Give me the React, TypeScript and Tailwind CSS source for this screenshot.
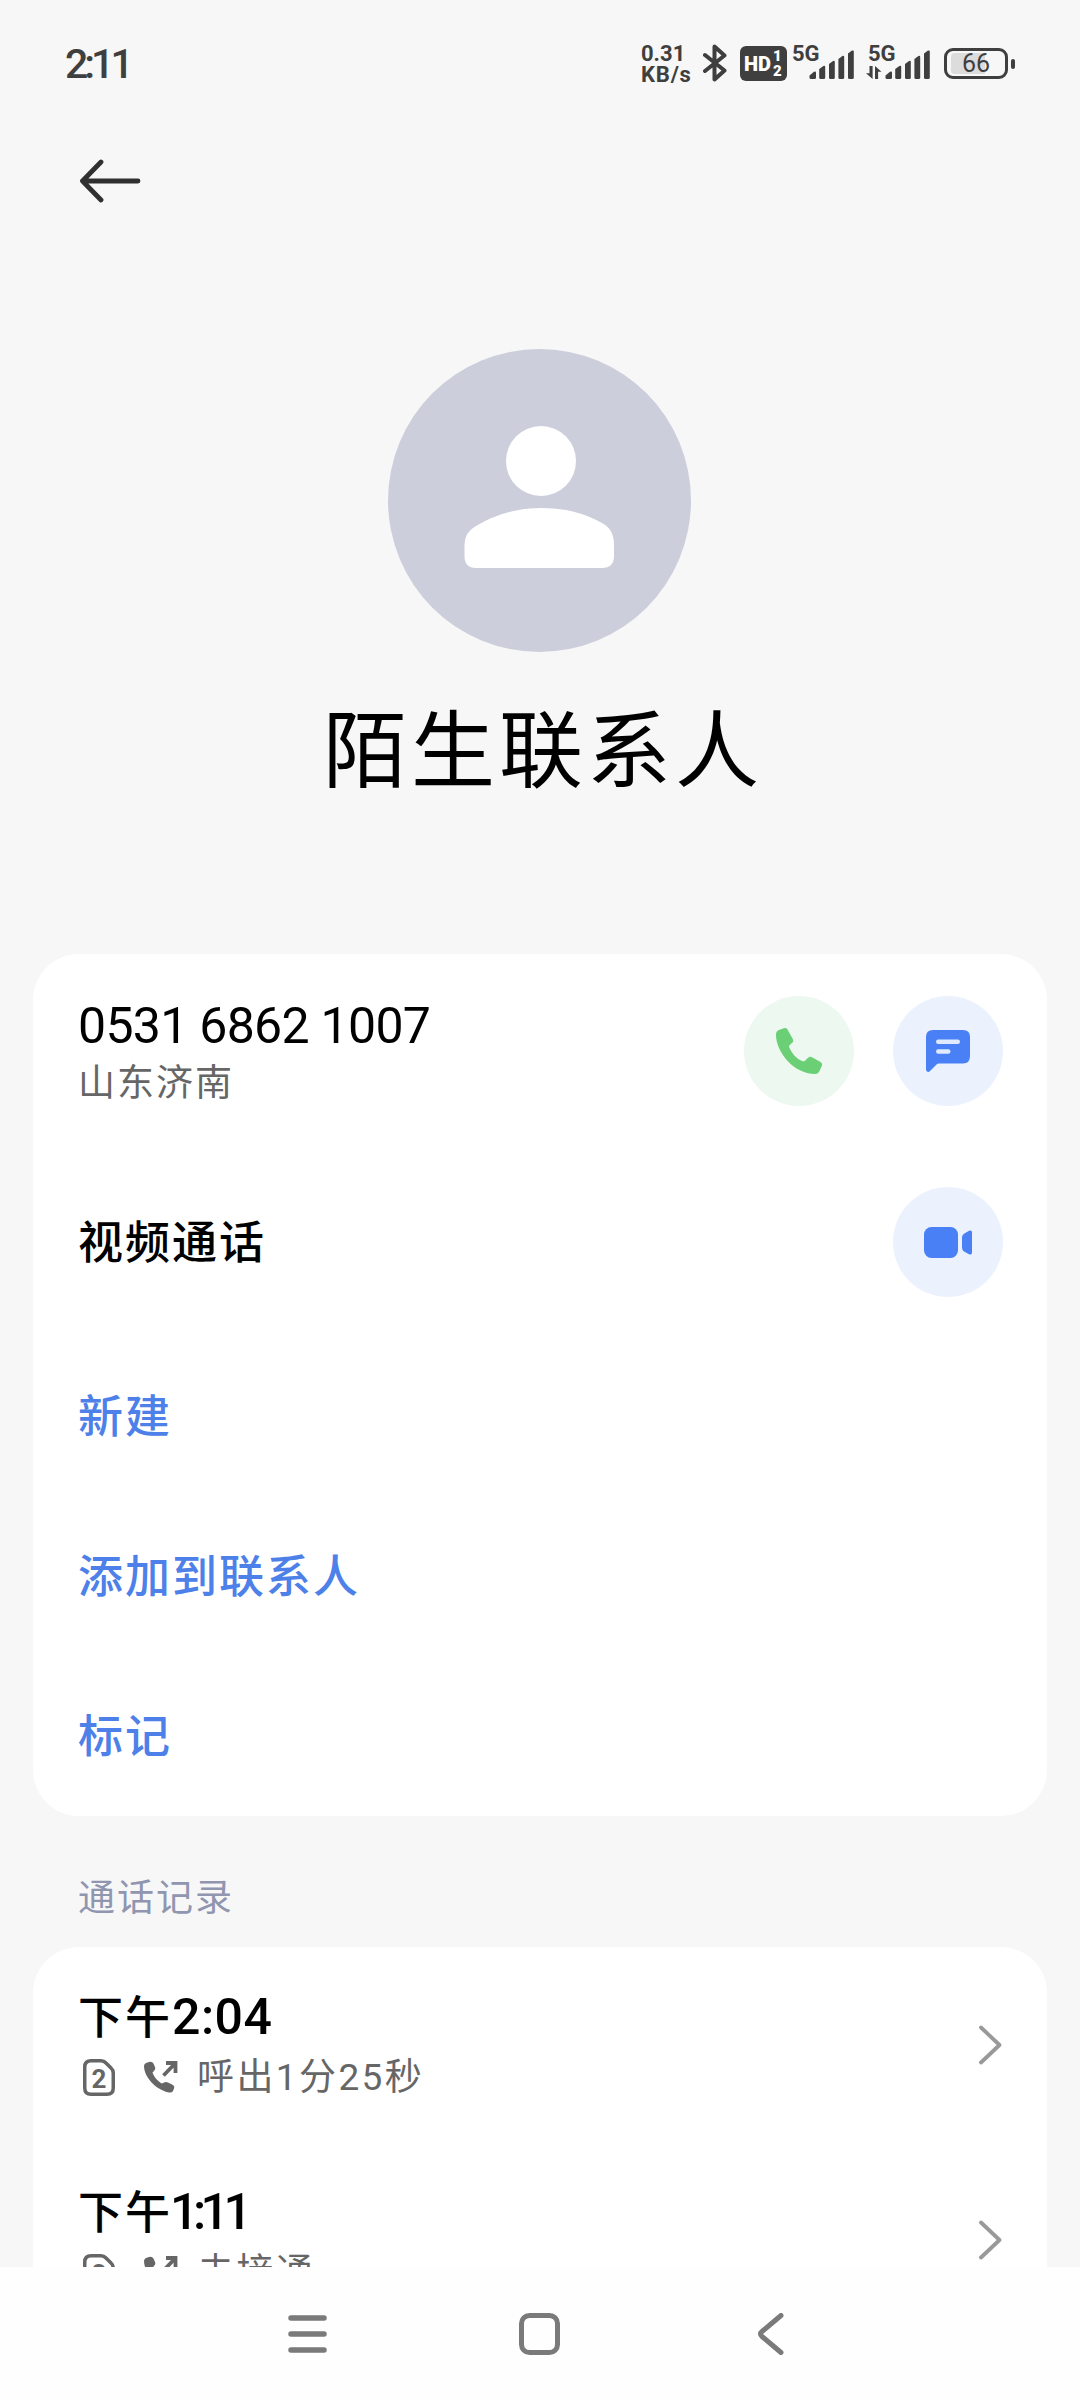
import React from 'react';

type CallRecord = {
  period: string;
  time: string;
  timeClass: string;
  detail: string;
};

const ACTIONS = ['新建', '添加到联系人', '标记'];

const RECORDS: CallRecord[] = [
  { period: '下午', time: '2:04', timeClass: 'tracking-[0.5px]', detail: '呼出1分25秒' },
  // pairs of 1s are set tighter
  { period: '下午', time: '1:11', timeClass: 'tracking-[-5.5px] -ml-[2px]', detail: '未接通' },
];

function SignalBars() {
  return (
    <svg className="h-[29px] w-[46px]" viewBox="0 0 46 29" fill="#3f3f3f">
      <path d="M0.5 27.5V25.5L5 21.8Q7 21 7 23V27.5Q7 29 5.5 29H2Q.5 29 .5 27.5Z" />
      <path d="M10.2 27.5V19L14.4 16Q16.2 15.3 16.2 17V27.5Q16.2 29 14.7 29H11.7Q10.2 29 10.2 27.5Z" />
      <path d="M20 27.5V14L24 11Q25.8 10.4 25.8 12V27.5Q25.8 29 24.3 29H21.5Q20 29 20 27.5Z" />
      <path d="M29.4 27.5V9L33.4 6Q35.2 5.4 35.2 7V27.5Q35.2 29 33.7 29H30.9Q29.4 29 29.4 27.5Z" />
      <path d="M39 27.5V3.5L43 .5Q44.8 0 44.8 1.6V27.5Q44.8 29 43.3 29H40.5Q39 29 39 27.5Z" />
    </svg>
  );
}

function Signal({ data }: { data?: boolean }) {
  return (
    <div className="relative h-[33px] w-[62px]">
      <span className="absolute left-0 top-0 text-[22px] leading-[16px] font-bold">5G</span>
      {data && (
        <svg className="absolute bottom-0 left-[-2px] h-[13px] w-[16px]" viewBox="0 0 16 13" fill="#3f3f3f">
          <path d="M3.5 0H6.6V13L0 7.2H3.5ZM9 13V0L15.5 5.8H12.1V13Z" />
        </svg>
      )}
      <div className="absolute bottom-0 left-[17px]">
        <SignalBars />
      </div>
    </div>
  );
}

function StatusBar() {
  return (
    <header className="flex h-[127px] items-start justify-between pl-[65px] pr-[65px] pt-[44px] text-[#3f3f3f]">
      <span className="mt-[2px] text-[41px] leading-[36px] font-medium tracking-[-4px]">2:11</span>
      <div className="flex items-start">
        <div className="w-[62px] text-[22px] leading-[21px] font-bold">
          <div className="-mt-[1px]">0.31</div>
          <div className="tracking-[0.8px]">KB/s</div>
        </div>
        <svg className="mr-[13px] h-[38px] w-[24px]" viewBox="0 0 24 38" fill="none" stroke="#3f3f3f" strokeWidth="4" strokeLinejoin="round" strokeLinecap="round">
          <path d="M2 11 21.5 26.5 11.5 35.5V2.5L21.5 11.5 2 27" />
        </svg>
        <div className="mr-[5px] mt-[2px] flex h-[35px] w-[47px] items-center rounded-[6px] bg-[#3f3f3f] pl-[4px] text-white">
          <span className="text-[20px] leading-none font-black">HD</span>
          <span className="ml-[2px] flex flex-col text-[15px] leading-[15px] font-black">
            <span>1</span>
            <span>2</span>
          </span>
        </div>
        <div className="mt-[2px] flex">
          <Signal />
          <div className="w-[14px]" />
          <Signal data />
        </div>
        <div className="ml-[14px] mt-[4px] flex items-center">
          <div className="relative flex h-[31px] w-[64px] items-center justify-center rounded-[9px] border-[3px] border-[#3f3f3f]">
            <div className="absolute left-[4px] top-[2px] h-[21px] w-[34px] rounded-l-[4px] bg-[#dcdcdc]" />
            <span className="relative text-[25px] leading-none">66</span>
          </div>
          <div className="ml-[3px] h-[10px] w-[4px] rounded-[2px] bg-[#3f3f3f]" />
        </div>
      </div>
    </header>
  );
}

function Avatar() {
  return (
    <div className="mr-[1px] mt-[114px] h-[303px] w-[303px] rounded-full bg-[#cccedb]">
      <svg className="h-full w-full" viewBox="0 0 303 303" fill="#fff">
        <circle cx="153" cy="112" r="35" />
        <path d="M76.5 196Q76.5 183 88 177Q118 159 153 159T214 174Q226 180 226 196V207Q226 219 214 219H88Q76.5 219 76.5 207Z" />
      </svg>
    </div>
  );
}

function PhoneButton() {
  return (
    <button type="button" className="flex h-[110px] w-[110px] items-center justify-center rounded-full bg-[#edf8f0]">
      <svg className="h-[46px] w-[46px]" viewBox="0 0 46 46" fill="#6bcf76">
        <path d="M0 7C0 4 1 3 3 2L7 .5Q10 -.8 11.5 1.5L17 11.5Q17.8 13 16.5 14.5L13.3 17.5Q12.8 18.5 13.3 19.5C16 26 21 31 26 33Q27.5 33.8 29 32.8L32 29.8Q34 28 36 29.2L44.5 34Q46.8 35.5 45.7 38L43.5 43Q42.3 46 39 46C18 46 0 24 0 7Z" />
      </svg>
    </button>
  );
}

function MessageButton() {
  return (
    <button type="button" className="flex h-[110px] w-[110px] items-center justify-center rounded-full bg-[#ebf2fe]">
      <svg className="h-[44px] w-[44px]" viewBox="0 0 44 44" fill="#4a80f5">
        <path d="M7 1H37Q44 1 44 8V27Q44 34.5 37 34.5H13Q11.5 34.5 10.5 35.5L4 42Q2.5 43.5 1 42.5Q0 42 0 40V8Q0 1 7 1Z" />
        <rect x="10" y="10.5" width="24" height="4.5" rx="2.25" fill="#dfeafe" />
        <rect x="10" y="20.3" width="14.5" height="4.5" rx="2.25" fill="#dfeafe" />
      </svg>
    </button>
  );
}

function VideoButton() {
  return (
    <button type="button" className="flex h-[110px] w-[110px] items-center justify-center rounded-full bg-[#ebf2fe]">
      <svg className="h-[31px] w-[48px]" viewBox="0 0 48 31" fill="#4a80f5">
        <rect x="0" y="0" width="34" height="31" rx="7.5" />
        <path d="M38 10.5Q38 8 40 6.8L45 3.8Q48 2.5 48 5.5V25.5Q48 28.5 45 27.2L40 24.5Q38 23.5 38 20.5Z" />
      </svg>
    </button>
  );
}

function RecordRow({ period, time, timeClass, detail }: CallRecord) {
  return (
    <div className="flex h-[195px] items-center justify-between">
      <div className="pt-[5px]">
        <div className="flex items-baseline text-[45px] leading-[58px] font-medium text-black">
          <span className="tracking-[2px]">{period}</span>
          <span className={`text-[50px] ${timeClass}`}>{time}</span>
        </div>
        <div className="flex h-[58px] items-center text-[#666]">
          <svg className="ml-[5px] h-[37px] w-[32px]" viewBox="0 0 32 37" fill="none" stroke="#666" strokeWidth="3.5">
            <path d="M8 1.75H18Q21 1.75 23 4L28 9Q30.25 11 30.25 14V29Q30.25 35.25 24 35.25H8Q1.75 35.25 1.75 29V8Q1.75 1.75 8 1.75Z" />
            <text x="16" y="29" textAnchor="middle" fontSize="26" fontWeight="700" fill="#666" stroke="none">2</text>
          </svg>
          <svg className="ml-[29px] h-[32px] w-[34px]" viewBox="0 0 34 32" fill="#666">
            <path d="M0 5Q0 3 2 2L5 1Q8 0 9.5 2.5L11 6Q12 8.5 10 10L8.5 11.5C10 16 14 20.5 18 22.5L20 21.5Q22 20.5 24 21.5L28 23.5Q31 25 30 27.5L29 30Q28 32 25 31.5C12 29 0 16 0 5Z" />
            <path d="M22 2H31.5V12M31.5 2 19.5 14.5" fill="none" stroke="#666" strokeWidth="3.8" />
          </svg>
          <span className="ml-[19px] pt-[1px] text-[37px] leading-[48px] tracking-[2.4px]">{detail}</span>
        </div>
      </div>
      <svg className="h-[40px] w-[24px]" viewBox="0 0 24 40" fill="none" stroke="#999" strokeWidth="3.8" strokeLinecap="round" strokeLinejoin="round">
        <path d="M2 2.5 20.5 20 2 37.5" />
      </svg>
    </div>
  );
}

export default function App() {
  return (
    <div className="flex h-[2400px] w-[1080px] flex-col overflow-hidden bg-[#f7f7f7] font-['Roboto','Noto_Sans_CJK_SC',sans-serif]">
      <StatusBar />

      {/* Back */}
      <div className="flex h-[108px] items-center pl-[79px]">
        <svg className="h-[44px] w-[62px]" viewBox="0 0 62 44" fill="none" stroke="#303030" strokeWidth="4.8" strokeLinecap="round" strokeLinejoin="round">
          <path d="M59 22H3.5M22 3 3.5 22 22 41" />
        </svg>
      </div>

      {/* Contact */}
      <section className="flex h-[719px] flex-col items-center">
        <Avatar />
        <h1 className="mt-[41px] pl-[6px] text-[84px] leading-[120px] tracking-[4px] text-black">陌生联系人</h1>
      </section>

      <section className="mx-[33px] h-[862px] shrink-0 rounded-[46px] bg-white pl-[45px] pr-[44px]">
        <div className="flex h-[194px] items-center justify-between">
          <div className="pt-[8px]">
            <div className="text-[50px] leading-[56px] tracking-[-0.7px] text-black">0531 6862 1007</div>
            <div className="pt-[2px] text-[37px] leading-[56px] tracking-[2px] text-[#666]">山东济南</div>
          </div>
          <div className="flex gap-[39px]">
            <PhoneButton />
            <MessageButton />
          </div>
        </div>
        <div className="flex h-[188px] items-center justify-between">
          <span className="pt-[3px] text-[45px] font-medium tracking-[2px] text-black">视频通话</span>
          <VideoButton />
        </div>
        {ACTIONS.map((label) => (
          <div key={label} className="flex h-[160px] items-center pt-[3px] text-[45px] font-medium tracking-[2px] text-[#4d80e8]">
            {label}
          </div>
        ))}
      </section>

      <h2 className="flex h-[131px] shrink-0 items-center pl-[78px] pt-[35px] text-[37px] tracking-[2px] text-[#9095b0]">通话记录</h2>

      {/* Call log, cut off by the navigation bar */}
      <section className="mx-[33px] h-[320px] shrink-0 overflow-hidden rounded-t-[46px] bg-white pl-[45px] pr-[44px]">
        {RECORDS.map((record) => (
          <RecordRow key={record.time} {...record} />
        ))}
      </section>

      <nav className="flex h-[133px] shrink-0 items-center bg-[#fefefe] pl-[288px]">
        <svg className="h-[42px] w-[39px]" viewBox="0 0 39 42" fill="none" stroke="#7a7a7a" strokeWidth="5.5" strokeLinecap="round">
          <path d="M3 5H36M3 21H36M3 37H36" />
        </svg>
        <svg className="ml-[192px] h-[42px] w-[41px]" viewBox="0 0 41 42" fill="none" stroke="#7a7a7a" strokeWidth="5">
          <rect x="2.5" y="2.5" width="36" height="37" rx="8" />
        </svg>
        <svg className="ml-[197px] h-[42px] w-[27px]" viewBox="0 0 27 42" fill="none" stroke="#7a7a7a" strokeWidth="5" strokeLinecap="round">
          <path d="M24 2.5 5 18.5Q2 21 5 23.5L24 39.5" />
        </svg>
      </nav>
    </div>
  );
}
